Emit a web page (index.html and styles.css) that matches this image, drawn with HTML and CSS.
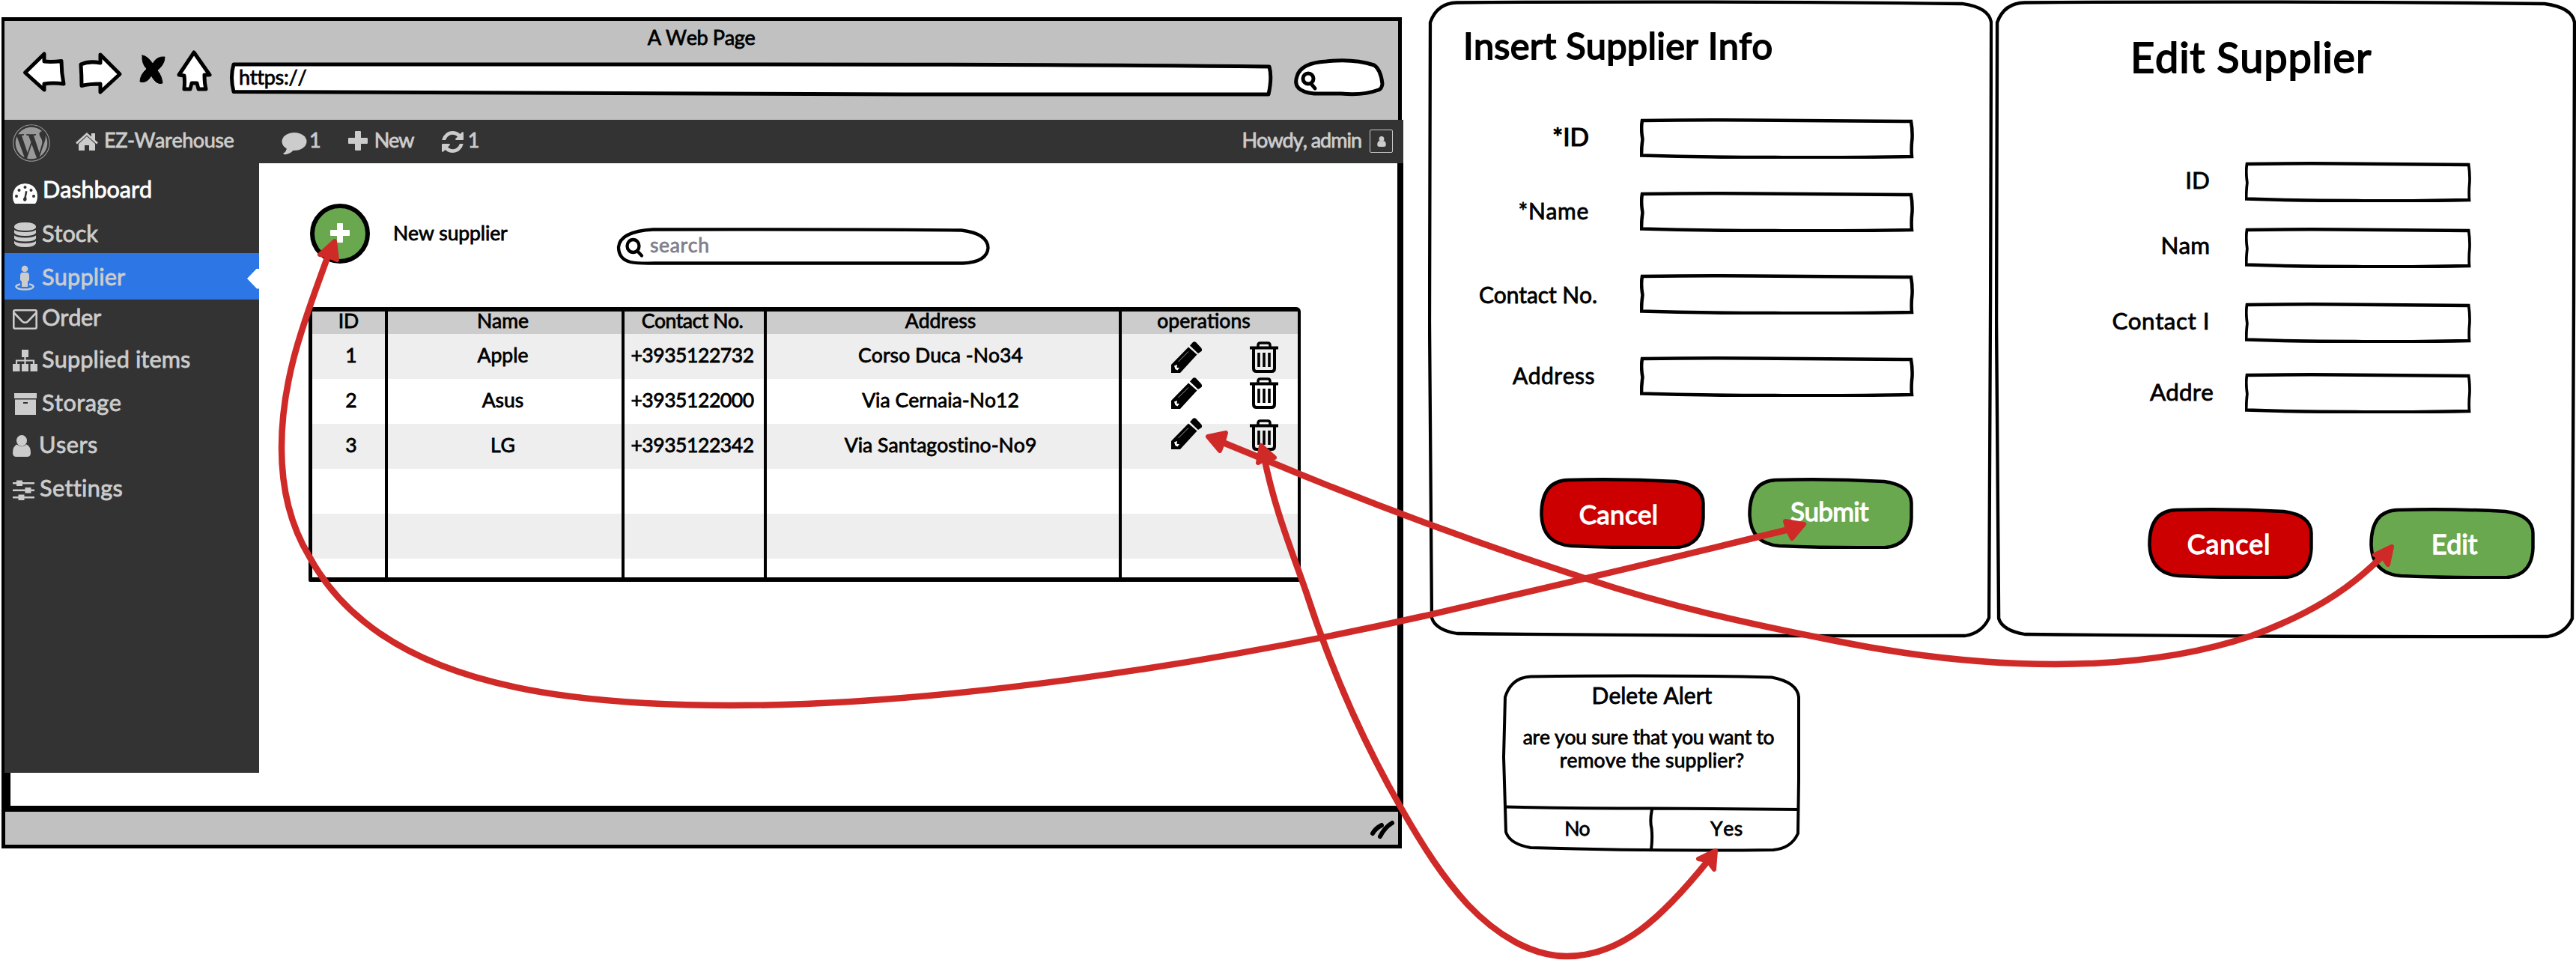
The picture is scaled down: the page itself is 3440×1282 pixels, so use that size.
FILE: index.html
```
<!DOCTYPE html>
<html lang="en">
<head>
<meta charset="utf-8">
<title>EZ-Warehouse suppliers wireframe</title>
<link rel="stylesheet" href="styles.css">
</head>
<body>
<svg class="defs" width="0" height="0">
  <symbol id="pencil" viewBox="0 0 41 42">
    <path d="M23 7.500 34.500 17.500 12 42H0V31z"/>
    <path d="M25 5.500 29 1Q31-.5 33 1L40 8.500Q42 11 40.500 13L36 16z"/>
    <path d="M4 32.500 8 31 7.500 35 11 35 8.500 38.500 5.500 37z" fill="#fff"/>
    <path d="M9.500 27 23 13.500" stroke="#ddd" stroke-width=".7"/>
  </symbol>
  <symbol id="trash" viewBox="0 0 38 42">
    <g fill="none" stroke="#000" stroke-width="4">
      <path d="M0 8.500H38"/>
      <path d="M11 8V5Q11 2 14 2H24Q27 2 27 5V8" stroke-width="3.500"/>
      <path d="M5 8V36Q5 40 9 40H29Q33 40 33 36V8"/>
      <path d="M12 15V34M19 15V34M26 15V34" stroke-width="3.600"/>
    </g>
  </symbol>
  <symbol id="person" viewBox="0 0 24 29">
    <ellipse cx="12" cy="7.500" rx="7" ry="7.500"/>
    <path d="M5.500 12.500Q12 18 18.500 12.500 24 15 24 24 24 29 19 29H5Q0 29 0 24 0 15 5.500 12.500z"/>
  </symbol>
  <symbol id="field" viewBox="0 0 366 54" preserveAspectRatio="none">
    <path d="M3 3Q90 2 150 2.500 280 3 362 4 364 15 363.500 27 362 40 363 51 240 53 180 52 90 52 2 49.500 2 38 3.500 28 1 14 3 3z" fill="#fff" stroke="#000" stroke-width="4.500"/>
  </symbol>
  <symbol id="pill-button" viewBox="0 0 221 95" preserveAspectRatio="none">
    <path d="M38 3Q110 1 182 5 218 10 218.500 34V54Q217 90 184 93 110 94 42 91 4 88 2.500 50 2 4 38 3z" stroke="#000" stroke-width="4.500"/>
  </symbol>
  <symbol id="card" viewBox="0 0 776 854" preserveAspectRatio="none">
    <path d="M39 3.500Q390 1 718 5 754 10 757 30L756 400 754 826Q745 846 722 850 380 851 39 847 10 842 5 826L2 430 3 30Q12 4 39 3.500z" transform="scale(1.0225 1)" fill="#fff" stroke="#000" stroke-width="4.300"/>
  </symbol>
</svg>

<main class="canvas">

  <section class="browser">
    <header class="chrome">
      <h1 class="page-title">A Web Page</h1>
      <div class="toolbar">
        <svg class="back" width="56" height="54" viewBox="0 0 56 54"><path d="M2.500 28 28 3V13Q38 14 51 12.500 51 28 54 43 40 41 28 43V51z"/></svg>
        <svg class="forward" width="58" height="56" viewBox="0 0 58 56"><path d="M3 16Q14 11 29 14V3L55 29 29 53V42Q14 42 4 44.500 4 30 3 16z"/></svg>
        <svg class="stop" width="34" height="40" viewBox="0 0 34 40"><path d="M3 1Q9 1 17 12 22 2 33 3 33 13 23 21 29 28 30 38 22 41 15 28 9 39 0 36 0 27 9 19 2 12 3 1z"/></svg>
        <svg class="up" width="47" height="56" viewBox="0 0 47 56"><path d="M23 3 44 33H37Q37 44 39 52H29L27 44H20L18 52H10Q11 42 10 34L3 33z"/></svg>
        <div class="address">
          <svg width="1393" height="46" viewBox="0 0 1393 46"><path d="M5 3H700Q1100 3 1388 6 1392 20 1387 43H900Q500 40 5 39.500 0 20 5 3z"/></svg>
          <span>https://</span>
        </div>
        <svg class="find" width="120" height="50" viewBox="0 0 120 50"><path d="M26 47Q-4 44 3 24 8 6 42 4 78 0 106 9 115 15 117 34 116 41 112 42 90 50 62 47 40 47 26 47z"/><circle cx="18" cy="27" r="7"/><path d="M22 34 27 40"/></svg>
      </div>
    </header>

    <nav class="admin-bar">
      <svg class="wp" width="50" height="50" viewBox="6 6 500 500"><path d="M61.700 169.400l101.500 278C92.200 413 43.300 340.200 43.300 256c0-30.900 6.600-60.100 18.400-86.600zm337.900 75.900c0-26.300-9.400-44.500-17.500-58.700-10.800-17.500-20.900-32.400-20.900-49.900 0-19.600 14.800-37.800 35.700-37.800.9 0 1.800.1 2.800.2-37.900-34.700-88.300-55.900-143.700-55.900-74.300 0-139.700 38.100-177.800 95.900 5 .2 9.700.3 13.700.3 22.200 0 56.700-2.700 56.700-2.700 11.500-.7 12.800 16.200 1.400 17.500 0 0-11.500 1.300-24.300 2l77.500 230.400L249.800 247l-33.100-90.800c-11.500-.7-22.300-2-22.300-2-11.500-.7-10.100-18.200 1.300-17.500 0 0 35.100 2.700 56 2.700 22.200 0 56.700-2.700 56.700-2.700 11.500-.7 12.800 16.200 1.400 17.500 0 0-11.500 1.300-24.300 2l76.900 228.700 21.200-70.900c9-29.400 16-50.500 16-68.700zm-139.900 29.300l-63.800 185.500c19.100 5.600 39.200 8.700 60.100 8.700 24.800 0 48.500-4.300 70.600-12.100-.6-.9-1.100-1.900-1.500-2.900l-65.400-179.200zm183-120.700c.9 6.800 1.400 14 1.400 21.900 0 21.600-4 45.800-16.200 76.200l-65 187.900C426.200 403 468.700 334.500 468.700 256c0-37-9.400-71.800-26-102.100zM504 256c0 136.800-111.300 248-248 248C119.200 504 8 392.700 8 256 8 119.200 119.200 8 256 8c136.700 0 248 111.200 248 248zm-11.400 0c0-130.500-106.200-236.600-236.600-236.600C125.500 19.400 19.400 125.500 19.400 256S125.600 492.600 256 492.600c130.500 0 236.600-106.100 236.600-236.600z"/></svg>
      <span class="bar-item home"><svg width="30" height="25" viewBox="0 0 30 25"><path d="M15 5 26 15V24H18V17H12V24H4V15z"/><path d="M15 0 21 5.500V1H26V10L30 13.500 28 15.500 15 3.800 2 15.500 0 13.500z"/></svg><b>EZ-Warehouse</b></span>
      <span class="bar-item comments"><svg width="34" height="30" viewBox="0 0 34 30"><ellipse cx="17" cy="12" rx="16.500" ry="12"/><path d="M7 20Q7 25 2 28 3 30 7 29 14 27 17 22z"/></svg><b>1</b></span>
      <span class="bar-item create"><svg width="26" height="26" viewBox="0 0 26 26"><path d="M10 0h6q1 0 1 1v8h8q1 0 1 1v6q0 1-1 1h-8v8q0 1-1 1h-6q-1 0-1-1v-8H1q-1 0-1-1v-6q0-1 1-1h8V1q0-1 1-1z"/></svg><b>New</b></span>
      <span class="bar-item updates"><svg width="29" height="29" viewBox="0 0 1536 1536"><path d="M1511 928q0 5-1 7-64 268-268 434.500t-478 166.500q-146 0-282.500-55t-243.500-157l-129 129q-19 19-45 19t-45-19-19-45v-448q0-26 19-45t45-19h448q26 0 45 19t19 45-19 45l-137 137q71 66 161 102t187 36q134 0 250-65t186-179q11-17 53-117 8-23 30-23h192q13 0 22.500 9.500t9.500 22.500zm25-800v448q0 26-19 45t-45 19h-448q-26 0-45-19t-19-45 19-45l138-138q-148-137-349-137-134 0-250 65t-186 179q-11 17-53 117-8 23-30 23h-199q-13 0-22.500-9.500t-9.500-22.500v-7q65-268 270-434.500t480-166.500q146 0 284 55.500t245 156.500l130-129q19-19 45-19t45 19 19 45z"/></svg><b>1</b></span>
      <span class="bar-item account"><b>Howdy, admin</b><i class="avatar"><svg width="12" height="14"><use href="#person"/></svg></i></span>
    </nav>

    <div class="body">
      <ul class="menu">
        <li class="dashboard"><svg width="33" height="27" viewBox="0 0 33 27"><path d="M3 27Q0 24 0 16 1 1 16.500 0 32 1 33 16 33 24 30 27z"/><g fill="#333"><circle cx="5" cy="17" r="2"/><circle cx="8.500" cy="9" r="2"/><circle cx="16.500" cy="5" r="2"/><circle cx="24.500" cy="9" r="2"/><circle cx="28" cy="17" r="2"/><path d="M17 10 19.500 10.500 18 18Q20 23 16 24 12 22 15.500 18z"/></g></svg><span>Dashboard</span></li>
        <li class="stock"><svg width="29" height="33" viewBox="0 0 29 33"><path d="M0 5Q2 0 14.500 0 27 0 29 5V7Q27 11 14.500 11 2 11 0 7zM0 10Q4 13 14.500 13 25 13 29 10V14Q27 18 14.500 18 2 18 0 14zM0 17.500Q4 20.500 14.500 20.500 25 20.500 29 17.500V21.500Q27 25.500 14.500 25.500 2 25.500 0 21.500zM0 25Q4 28 14.500 28 25 28 29 25V28Q27 33 14.500 33 2 33 0 28z"/></svg><span>Stock</span></li>
        <li class="supplier active"><svg width="26" height="33" viewBox="0 0 26 33"><circle cx="13" cy="4" r="4.300"/><path d="M9 9H17Q19 10 19 13V19L17 21V28H9V21L7 19V13Q7 10 9 9z"/><path d="M7 24.500Q1 26 1.300 28 3 31.500 13 31.500 23 31.500 24.700 28 25 26 19 24.500" fill="none" stroke="#ccc" stroke-width="2.400"/></svg><span>Supplier</span></li>
        <li class="order"><svg width="33" height="27" viewBox="0 0 33 27"><path d="M3 1.300H30Q31.700 1.300 31.700 3V24Q31.700 25.700 30 25.700H3Q1.300 25.700 1.300 24V3Q1.300 1.300 3 1.300zM2 5 13 16.500Q16.500 19 20 16.500L31 5" fill="none" stroke="#ccc" stroke-width="2.600"/></svg><span>Order</span></li>
        <li class="supplied"><svg width="33" height="29" viewBox="0 0 33 29"><path d="M12 0h9v10h-9zM0 19h9.500v10H0zM12 19h9v10h-9zM23.500 19H33v10h-9.500z"/><path d="M16.500 10V20M5 20V14.500H28V20" fill="none" stroke="#ccc" stroke-width="2.200"/></svg><span>Supplied items</span></li>
        <li class="storage"><svg width="30" height="29" viewBox="0 0 30 29"><path d="M0 0H30V7H0z"/><path d="M1 8.500H29V29H1zM12 12v2h6v-2z" fill-rule="evenodd"/></svg><span>Storage</span></li>
        <li class="users"><svg width="24" height="29"><use href="#person"/></svg><span>Users</span></li>
        <li class="settings"><svg width="29" height="27" viewBox="0 0 29 27"><path d="M0 3H29V5.500H0zM0 12.500H29V15H0zM0 22H29V24.500H0zM5 0.500h8v7.500H5zM16.500 10h8v7.500h-8zM7.500 19.500h8V27h-8z"/></svg><span>Settings</span></li>
      </ul>

      <div class="content">
        <div class="actions">
          <button class="add" aria-label="New supplier"><svg width="26" height="26" viewBox="0 0 26 26"><path d="M10 0h6q1 0 1 1v8h8q1 0 1 1v6q0 1-1 1h-8v8q0 1-1 1h-6q-1 0-1-1v-8H1q-1 0-1-1v-6q0-1 1-1h8V1q0-1 1-1z"/></svg></button>
          <span class="add-label">New supplier</span>
          <div class="search">
            <svg width="498" height="50" viewBox="0 0 498 50"><path d="M48 2.500Q260 2 460 3.500 495 8 495.500 27 494 46 462 47.500H50Q28 48 18 46 2 42 2 26 4 5 48 2.500z"/><ellipse cx="21.500" cy="24.500" rx="8" ry="8.500"/><path d="M27 31 33 37.500"/></svg>
            <span>search</span>
          </div>
        </div>
        <table class="suppliers">
          <thead><tr><th class="c-id">ID</th><th class="c-name">Name</th><th class="c-tel">Contact No.</th><th class="c-addr">Address</th><th class="c-ops">operations</th></tr></thead>
          <tbody>
            <tr><td class="c-id">1</td><td class="c-name">Apple</td><td class="c-tel">+3935122732</td><td class="c-addr">Corso Duca -No34</td><td class="ops"><div><svg width="41" height="42"><use href="#pencil"/></svg><svg width="38" height="42"><use href="#trash"/></svg></div></td></tr>
            <tr><td class="c-id">2</td><td class="c-name">Asus</td><td class="c-tel">+3935122000</td><td class="c-addr">Via Cernaia-No12</td><td class="ops second"><div><svg width="41" height="42"><use href="#pencil"/></svg><svg width="38" height="42"><use href="#trash"/></svg></div></td></tr>
            <tr><td class="c-id">3</td><td class="c-name">LG</td><td class="c-tel">+3935122342</td><td class="c-addr">Via Santagostino-No9</td><td class="ops third"><div><svg width="41" height="42"><use href="#pencil"/></svg><svg width="38" height="42"><use href="#trash"/></svg></div></td></tr>
            <tr><td></td><td></td><td></td><td></td><td></td></tr>
            <tr><td></td><td></td><td></td><td></td><td></td></tr>
            <tr class="last"><td></td><td></td><td></td><td></td><td></td></tr>
          </tbody>
        </table>
      </div>
    </div>
    <footer class="status"><svg width="30" height="26" viewBox="0 0 30 26"><path d="M2 20Q6 13 14 9M12 24Q18 12 28 6"/></svg></footer>
  </section>

  <section class="window insert">
    <svg class="outline"><use href="#card"/></svg>
    <h2>Insert Supplier Info</h2>
    <div class="row r-id"><label>*ID</label><svg><use href="#field"/></svg></div>
    <div class="row r-name"><label>*Name</label><svg><use href="#field"/></svg></div>
    <div class="row r-tel"><label>Contact No.</label><svg><use href="#field"/></svg></div>
    <div class="row r-addr"><label>Address</label><svg><use href="#field"/></svg></div>
    <div class="buttons">
      <button class="btn cancel"><svg><use href="#pill-button"/></svg><span>Cancel</span></button>
      <button class="btn go submit"><svg><use href="#pill-button"/></svg><span>Submit</span></button>
    </div>
  </section>

  <section class="window edit">
    <svg class="outline"><use href="#card"/></svg>
    <h2>Edit Supplier</h2>
    <div class="row r-id"><label>ID</label><svg><use href="#field"/></svg></div>
    <div class="row r-name"><label>Nam</label><svg><use href="#field"/></svg></div>
    <div class="row r-tel"><label>Contact I</label><svg><use href="#field"/></svg></div>
    <div class="row r-addr"><label>Addre</label><svg><use href="#field"/></svg></div>
    <div class="buttons">
      <button class="btn cancel"><svg><use href="#pill-button"/></svg><span>Cancel</span></button>
      <button class="btn go"><svg><use href="#pill-button"/></svg><span>Edit</span></button>
    </div>
  </section>

  <section class="window alert">
    <svg class="outline" viewBox="0 0 400 236"><path d="M38 2.500Q210 0 360 3.500 394 10 396 30L396 140 395 212Q386 232 362 234 210 236 38 231 10 226 5 210L2 110 4 30Q12 4 38 2.500z" fill="#fff"/><path d="M4 176.500Q100 178.500 200 178.500 320 179 397 180M200 180Q197 195 199.500 205 201 218 199 234"/></svg>
    <h3>Delete Alert</h3>
    <p><span class="line-one">are you sure that you want to</span><br><span class="line-two">remove the supplier?</span></p>
    <div class="choices"><span class="no">No</span><span class="yes">Yes</span></div>
  </section>

  <svg class="links" width="3440" height="1282" viewBox="0 0 3440 1282">
    <g class="wire">
      <path d="M440 336C410 420 376 500 376 598 376 660 390 705 413 743 432 778 455 805 486 830 590 915 760 942 976 942 1250 942 1600 890 1900 823 2000 800 2119 773 2393 706"/>
      <path d="M1626 588 1687 613C1835 675 1980 728 2119 773 2230 810 2335 833 2447 855 2550 876 2650 887 2745 887 2840 887 2930 875 3007 849 3080 822 3135 790 3182 742"/>
      <path d="M1688 610C1702 680 1725 735 1744 790 1778 895 1820 990 1871 1079 1900 1130 1927 1172 1960 1208 1998 1248 2045 1277 2092 1277 2165 1277 2220 1225 2282 1148"/>
    </g>
    <g class="head">
      <path d="M447 322 427 340 436 341 450 347z"/>
      <path d="M2409 700 2384 696 2387 707 2393 719z"/>
      <path d="M1613 583 1637 578 1634 589 1629 602z"/>
      <path d="M1684 595 1680 618 1690 613 1702 611z"/>
      <path d="M3194 730 3171 741 3182 744 3189 754z"/>
      <path d="M2291 1136 2268 1147 2280 1149 2289 1161z"/>
    </g>
  </svg>
</main>
</body>
</html>
```
FILE: styles.css
```
* { box-sizing: border-box; }

body {
  margin: 0;
  background: #fff;
  color: #000;
  font-family: Lato, "Liberation Sans", sans-serif;
  font-size: 26.5px;
  line-height: 1.2;
  font-kerning: none;
  -webkit-text-stroke: .8px currentColor;
}

h1, h2, h3, p, ul { margin: 0; padding: 0; font-weight: 400; }
b, th { font-weight: 400; }
i { font-style: normal; }
svg { display: block; flex: none; overflow: visible; }
button { border: 0; background: none; padding: 0; color: inherit; font: inherit; -webkit-text-stroke: inherit; }
.defs { position: absolute; }

.canvas { position: relative; width: 3440px; height: 1282px; overflow: hidden; }

/* Browser window */
.browser {
  position: absolute;
  left: 2px;
  top: 23px;
  width: 1872px;
  height: 1110px;
  display: flex;
  flex-direction: column;
  background:
    linear-gradient(#000, #000) no-repeat 0 137px / 4px 973px,
    linear-gradient(#000, #000) no-repeat 4px 1009px / 8px 60px;
}

.chrome {
  width: 1870px;
  height: 137px;
  border: solid #000;
  border-width: 5px 5px 0 4px;
  background: #c1c1c1;
}

.page-title { height: 43px; font-size: 27px; line-height: 43px; letter-spacing: -.37px; text-align: center; }

.toolbar { display: flex; align-items: flex-start; padding-left: 25px; }
.toolbar path, .toolbar circle { fill: #fff; stroke: #000; stroke-width: 5; stroke-linejoin: round; stroke-linecap: round; }
.toolbar .stop path { fill: #000; stroke-width: 1; }
.toolbar .forward { margin-left: 18px; margin-top: -1px; }
.toolbar .stop { margin-left: 24px; margin-top: 2px; }
.toolbar .up { margin-left: 15px; margin-top: -4px; }
.back { margin-top: -2px; }

.address { display: flex; align-items: center; width: 1393px; height: 46px; margin: 12px 29px 0 24px; }
.address svg { margin-right: -1393px; }
.address span { position: relative; z-index: 1; margin-left: 12px; padding-bottom: 5px; font-size: 27px; letter-spacing: -.25px; }
.find { margin-top: 7px; }

.admin-bar {
  display: flex;
  align-items: flex-start;
  height: 58px;
  margin-left: 4px;
  padding-left: 11px;
  background: #333;
  color: #ccc;
  fill: #ccc;
  font-size: 27px;
  white-space: nowrap;
}
.wp { margin-top: 6px; fill: #999; }
.bar-item { display: flex; align-items: flex-start; line-height: 32px; margin-top: 11px; }
.home { margin-left: 34px; }
.home svg { margin: 6px 8px 0 0; }
.home b { width: 171px; letter-spacing: -.45px; }
.comments { margin-left: 66px; }
.comments svg { margin: 6px 3px 0 0; }
.create { margin-left: 36px; }
.create svg { margin: 4px 9px 0 0; }
.create b { width: 52px; letter-spacing: -1.200px; }
.updates { margin-left: 38px; }
.updates svg { margin: 4px 6px 0 0; }
.account { margin-left: auto; margin-right: 14px; }
.account b { letter-spacing: -1px; margin-right: 11px; }
.avatar { display: grid; place-items: center; width: 31px; height: 31px; border: 1.5px solid #ccc; border-radius: 2px; margin-top: 2px; }

.body { display: flex; height: 858px; margin-left: 4px; }

.menu {
  flex: none;
  width: 340px;
  height: 814px;
  background: #333;
  color: #ccc;
  fill: #ccc;
  font-size: 30.7px;
  line-height: 36px;
  list-style: none;
}
.menu li { display: flex; align-items: center; width: 340px; height: 56px; padding-left: 11px; }
.menu span { padding-top: 1px; margin-left: -1px; }
.menu .dashboard { height: 62px; margin-top: 5px; color: #fff; fill: #fff; letter-spacing: -.12px; }
.menu .dashboard svg { margin: 8px 8px 0 0; }
.menu .dashboard span { padding: 0 0 2px; }
.menu .stock { height: 53px; padding-left: 13px; letter-spacing: -.1px; }
.menu .stock svg { margin: 4px 9px 0 0; }
.menu .supplier { height: 62px; padding-left: 14px; letter-spacing: .15px; }
.menu .supplier svg { margin: 5px 11px 0 0; }
.menu .active { background: #2c77e5; }
.menu .active::after {
  content: "";
  width: 16px;
  height: 27px;
  margin-left: auto;
  margin-top: 6px;
  background: #fff;
  clip-path: polygon(0 50%, 13px 0, 100% 0, 100% 100%, 13px 100%);
}
.menu .order { height: 46px; letter-spacing: -.27px; }
.menu .order svg { margin: 6px 7px 0 0; }
.menu .supplied { height: 66px; letter-spacing: .1px; }
.menu .supplied svg { margin: 5px 7px 0 0; }
.menu .storage { height: 50px; padding-left: 13px; letter-spacing: .38px; }
.menu .storage svg { margin: 5px 8px 0 0; }
.menu .users { height: 62px; letter-spacing: .47px; }
.menu .users svg { margin: 5px 12px 0 0; }
.menu .settings { height: 54px; letter-spacing: .31px; }
.menu .settings svg { margin: 6px 8px 0 0; }

.content { width: 1528px; border-right: 8px solid #000; padding: 54px 0 0 66px; }

.actions { display: flex; align-items: flex-start; padding-left: 2px; }
.add { display: grid; place-items: center; width: 80px; height: 80px; border: 6px solid #000; border-radius: 50%; background: #6aa84f; fill: #fff; }
.add svg { margin-top: -2px; }
.add-label { width: 154px; margin: 24px 0 0 31px; letter-spacing: -.12px; }
.search { display: flex; align-items: center; height: 50px; margin: 32px 0 0 145px; color: #80808c; }
.search svg { margin-right: -498px; fill: none; stroke: #000; stroke-width: 4.300; stroke-linecap: round; }
.search span { margin-left: 44px; padding-bottom: 2px; letter-spacing: .64px; }

.suppliers {
  width: 1325px;
  margin-top: 56px;
  border: solid #000;
  border-width: 6px 4px 6px 5px;
  border-radius: 2px 6px 2px 2px;
  border-spacing: 0;
  table-layout: fixed;
}
.suppliers th, .suppliers td { height: 60px; padding: 0; border-right: 4px solid #000; line-height: 26px; text-align: center; white-space: nowrap; }
.suppliers th { height: 30px; background: #ccc; line-height: 24px; }
.suppliers th:last-child, .suppliers td:last-child { border-right: 0; }
.suppliers tbody tr:nth-child(odd) { background: #eee; }
.suppliers .last td { height: 25px; }
.suppliers th.c-id, .suppliers th.c-name, .suppliers th.c-tel, .suppliers th.c-addr, .suppliers th.c-ops { padding-bottom: 6px; }
.suppliers td.c-id, .suppliers td.c-name, .suppliers td.c-tel, .suppliers td.c-addr { padding-bottom: 4px; }
.c-id { width: 101px; }
.suppliers td.c-id { padding-left: 7px; }
.c-name { width: 316px; }
.suppliers .c-name { padding-right: 5px; }
.c-tel { width: 190px; }
.suppliers .c-tel { padding-right: 5px; letter-spacing: -.45px; }
.c-addr { width: 474px; }
.suppliers .c-addr { padding-right: 6px; letter-spacing: .05px; }
.suppliers .c-ops { padding-right: 16px; }
.suppliers td.ops { vertical-align: top; }
.ops div { display: flex; align-items: flex-start; height: 0; padding-left: 66px; gap: 64px; margin-top: 10px; }
.ops.second div { margin-top: -2px; }
.ops.third div { margin-top: -8px; }
.ops.third svg + svg { margin-top: 2px; }

.status {
  display: flex;
  justify-content: flex-end;
  align-items: center;
  width: 1870px;
  height: 57px;
  margin-top: auto;
  border: solid #000;
  border-width: 8px 5px 5px 5px;
  background: #c1c1c1;
}
.status svg { margin-right: 6px; fill: none; stroke: #000; stroke-width: 6; stroke-linecap: round; }

/* Floating windows */
.window { position: absolute; z-index: 0; display: flex; flex-direction: column; }
.outline { position: absolute; left: 0; top: 0; width: 100%; height: 100%; z-index: -1; }

.insert { left: 1907px; top: 0; width: 754px; height: 853px; padding: 31px 0 0 47px; font-size: 30px; }
.insert h2 { height: 58px; font-size: 48.8px; line-height: 58px; letter-spacing: .23px; -webkit-text-stroke-width: 1.8px; }
.row { display: flex; align-items: center; justify-content: flex-end; height: 54px; }
.row label { white-space: nowrap; }
.insert .row { margin-right: 105px; }
.insert .row svg { width: 366px; height: 54px; }
.insert .r-id { margin-top: 69px; font-size: 33.500px; -webkit-text-stroke-width: 1.200px; }
.insert .r-id label { margin-right: 68px; padding-bottom: 5px; }
.insert .r-name { margin-top: 44px; letter-spacing: .69px; }
.insert .r-name label { margin-right: 68px; padding-bottom: 4px; }
.insert .r-tel { margin-top: 56px; letter-spacing: -.1px; }
.insert .r-tel label { margin-right: 57px; padding-bottom: 1px; }
.insert .r-addr { margin-top: 56px; letter-spacing: .49px; }
.insert .r-addr label { margin-right: 60px; padding-bottom: 5px; }

.buttons { display: flex; color: #fff; }
.btn { display: flex; align-items: center; justify-content: center; width: 221px; height: 95px; font-size: 35px; }
.btn svg { width: 221px; height: 95px; margin-right: -221px; fill: #c00; }
.btn.go svg { fill: #6aa84f; }
.btn span { position: relative; width: 221px; text-align: center; -webkit-text-stroke-width: 1.300px; }
.insert .buttons { margin: 108px 0 0 102px; gap: 57px; }
.insert .cancel span { padding-right: 10px; letter-spacing: .33px; }
.insert .submit span { padding: 0 3px 8px 0; letter-spacing: -.68px; }

.edit { left: 2664px; top: 0; width: 776px; height: 854px; padding-top: 42px; font-size: 31.400px; }
.edit h2 { height: 67px; padding-left: 181px; font-size: 56px; line-height: 67px; letter-spacing: .73px; -webkit-text-stroke-width: 1.800px; }
.edit .row { margin-right: 140px; }
.edit .row svg { width: 302px; height: 54px; }
.edit .row label { margin-right: 47px; padding-bottom: 5px; }
.edit .r-id { margin-top: 107px; }
.edit .r-name { margin-top: 34px; }
.edit .row.r-name label { padding-bottom: 6px; }
.edit .r-tel { margin-top: 46px; letter-spacing: .49px; }
.edit .r-addr { margin-top: 40px; letter-spacing: .12px; }
.edit .row.r-addr label { margin-right: 42px; padding-bottom: 2px; }
.edit .buttons { margin: 126px 0 0 204px; gap: 75px; }
.edit .btn { font-size: 36px; }
.edit .btn span { padding-top: 2px; }
.edit .cancel span { padding-right: 4px; letter-spacing: .81px; }
.edit .go span { letter-spacing: -.29px; padding-left: 6px; }

.alert { left: 2006px; top: 901px; width: 400px; height: 236px; padding-top: 9px; text-align: center; }
.alert .outline { fill: none; stroke: #000; stroke-width: 4; }
.alert h3 { height: 36px; font-size: 30px; line-height: 36px; }
.alert p { padding-top: 23px; line-height: 31px; }
.line-one { letter-spacing: -.29px; margin-right: 9px; }
.line-two { letter-spacing: .12px; }
.choices { display: grid; grid-template-columns: 1fr 1fr; height: 56px; margin-top: 47px; line-height: 57px; }
.choices .no { letter-spacing: -.96px; }
.choices .yes { letter-spacing: .65px; }

/* Flow arrows over everything */
.links { position: absolute; left: 0; top: 0; z-index: 2; }
.wire { fill: none; stroke: #cf2a27; stroke-width: 8.500; }
.head { fill: #cf2a27; stroke: #cf2a27; stroke-width: 6; stroke-linejoin: round; }
```
